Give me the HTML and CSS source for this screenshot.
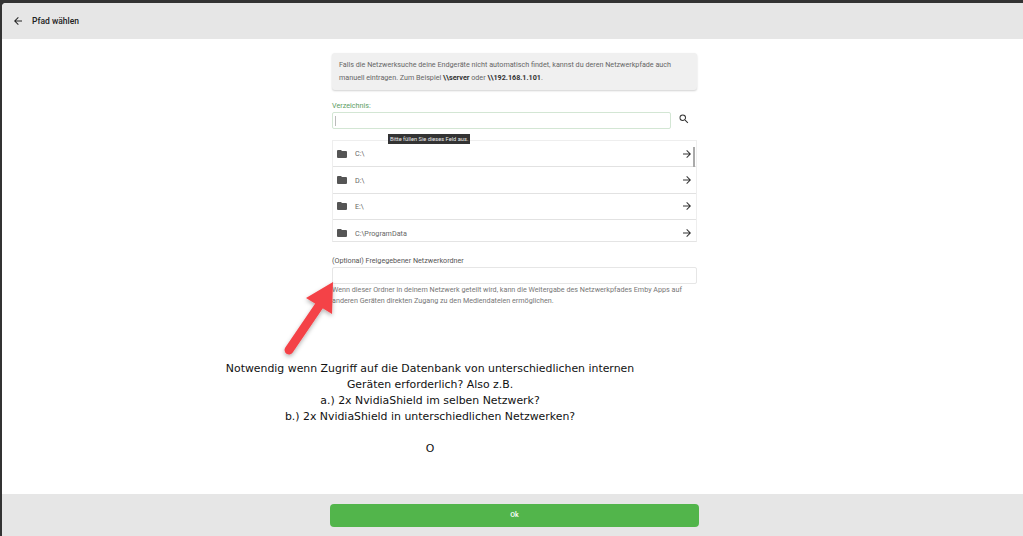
FILE: index.html
```html
<!DOCTYPE html>
<html lang="de">
<head>
  <meta charset="UTF-8" />
  <title>Pfad wählen</title>
  <link rel="stylesheet" href="styles.css">
</head>
<body>
  <div class="dialog">
    <div class="kopf">
      <svg class="zurueck" viewBox="0 0 24 24"><path d="M20 11H7.800l5.600-5.600L12 4l-8 8 8 8 1.400-1.400L7.800 13H20z"/></svg>
      <h1>Pfad wählen</h1>
    </div>

    <div class="inhalt">
      <div class="formular">
        <div class="hinweis">
          Falls die Netzwerksuche deine Endgeräte nicht automatisch findet, kannst du deren Netzwerkpfade auch<br>
          manuell eintragen. Zum Beispiel <b>\\server</b> oder <b>\\192.168.1.101</b>.
        </div>

        <label class="feld-label">Verzeichnis:</label>
        <div class="suche">
          <div class="eingabe aktiv"><span class="cursor"></span></div>
          <svg class="lupe" viewBox="0 0 24 24"><path d="M15.500 14h-.79l-.28-.27A6.471 6.471 0 0 0 16 9.500 6.500 6.500 0 1 0 9.500 16c1.610 0 3.090-.59 4.230-1.570l.27.28v.79l5 4.990L20.490 19l-4.990-5zm-6 0C7.010 14 5 11.990 5 9.500S7.010 5 9.500 5 14 7.010 14 9.500 11.990 14 9.500 14z"/></svg>
          <span class="tooltip">Bitte füllen Sie dieses Feld aus.</span>
        </div>

        <div class="liste">
          <div class="zeile">
            <svg class="ordner" viewBox="0 0 24 24"><path d="M10 4H4a2 2 0 0 0-2 2v12a2 2 0 0 0 2 2h16a2 2 0 0 0 2-2V8a2 2 0 0 0-2-2h-8z"/></svg>
            <span class="pfad">C:\</span>
            <svg class="pfeil" viewBox="0 0 24 24"><path d="M12 4l-1.400 1.400L16.200 11H4v2h12.200l-5.600 5.600L12 20l8-8z"/></svg>
          </div>
          <div class="zeile">
            <svg class="ordner" viewBox="0 0 24 24"><path d="M10 4H4a2 2 0 0 0-2 2v12a2 2 0 0 0 2 2h16a2 2 0 0 0 2-2V8a2 2 0 0 0-2-2h-8z"/></svg>
            <span class="pfad">D:\</span>
            <svg class="pfeil" viewBox="0 0 24 24"><path d="M12 4l-1.400 1.400L16.200 11H4v2h12.200l-5.600 5.600L12 20l8-8z"/></svg>
          </div>
          <div class="zeile">
            <svg class="ordner" viewBox="0 0 24 24"><path d="M10 4H4a2 2 0 0 0-2 2v12a2 2 0 0 0 2 2h16a2 2 0 0 0 2-2V8a2 2 0 0 0-2-2h-8z"/></svg>
            <span class="pfad">E:\</span>
            <svg class="pfeil" viewBox="0 0 24 24"><path d="M12 4l-1.400 1.400L16.200 11H4v2h12.200l-5.600 5.600L12 20l8-8z"/></svg>
          </div>
          <div class="zeile letzte">
            <svg class="ordner" viewBox="0 0 24 24"><path d="M10 4H4a2 2 0 0 0-2 2v12a2 2 0 0 0 2 2h16a2 2 0 0 0 2-2V8a2 2 0 0 0-2-2h-8z"/></svg>
            <span class="pfad">C:\ProgramData</span>
            <svg class="pfeil" viewBox="0 0 24 24"><path d="M12 4l-1.400 1.400L16.200 11H4v2h12.200l-5.600 5.600L12 20l8-8z"/></svg>
          </div>
          <div class="scrollbar"></div>
        </div>

        <label class="feld-label netz">(Optional) Freigegebener Netzwerkordner</label>
        <div class="eingabe"></div>
        <p class="beschreibung">Wenn dieser Ordner in deinem Netzwerk geteilt wird, kann die Weitergabe des Netzwerkpfades Emby Apps auf anderen Geräten direkten Zugang zu den Mediendateien ermöglichen.</p>
      </div>

      <div class="notiz">
        Notwendig wenn Zugriff auf die Datenbank von unterschiedlichen internen<br>
        Geräten erforderlich? Also z.B.<br>
        a.) 2x NvidiaShield im selben Netzwerk?<br>
        b.) 2x NvidiaShield in unterschiedlichen Netzwerken?<br>
        <br>
        O
      </div>
    </div>

    <div class="fuss">
      <button class="ok">Ok</button>
    </div>
  </div>

  <!-- roter Pfeil aus dem Screenshot -->
  <svg class="rot-pfeil" viewBox="0 0 70 85">
    <defs>
      <filter id="schatten" x="-30%" y="-30%" width="160%" height="160%">
        <feDropShadow dx="0" dy="2" stdDeviation="2" flood-color="#000" flood-opacity="0.3"/>
      </filter>
    </defs>
    <g filter="url(#schatten)">
      <path d="M55 6L28 22L54 38Z" fill="#f44347"/>
      <path d="M43 27L11 74" stroke="#f44347" stroke-width="9" stroke-linecap="round" fill="none"/>
    </g>
  </svg>
</body>
</html>
```

FILE: styles.css
```css
html, body {
  height: 100%;
}
body {
  margin: 0;
  font-family: Roboto, "Liberation Sans", sans-serif;
  background-color: #333;
  padding: 3px 0 0 2px;
  box-sizing: border-box;
  overflow: hidden;
}
.dialog {
  height: 100%;
  display: flex;
  flex-direction: column;
  background-color: #fff;
  border-top-left-radius: 4px;
}
.kopf {
  height: 36px;
  flex-shrink: 0;
  display: flex;
  align-items: center;
  padding-left: 10px;
  background-color: #e6e6e6;
  border-top-left-radius: 4px;
}
.zurueck {
  width: 12px;
  height: 12px;
  fill: #222;
}
.kopf h1 {
  margin: 0 0 0 8px;
  font-size: 8.500px;
  font-weight: 500;
  color: #222;
}
.inhalt {
  flex: 1;
  display: flex;
  flex-direction: column;
  align-items: flex-start;
}
.formular {
  width: 365px;
  margin: 14px 0 0 330px;
}
.hinweis {
  height: 37px;
  box-sizing: border-box;
  padding: 6px 7px;
  background-color: #f0f0f0;
  border-radius: 3px;
  box-shadow: 0 1px 2px rgba(0, 0, 0, 0.18);
  font-size: 7.200px;
  line-height: 12.500px;
  color: #666;
  white-space: nowrap;
}
.hinweis b {
  color: #333;
}
.feld-label {
  display: block;
  margin: 11px 0 2px;
  font-size: 7.200px;
  line-height: 9px;
  color: #5c9c5f;
}
.suche {
  position: relative;
  display: flex;
  align-items: center;
}
.eingabe {
  height: 17px;
  box-sizing: border-box;
  border: 1px solid #e6e6e6;
  border-radius: 2px;
  background-color: #fff;
}
.eingabe.aktiv {
  width: 339px;
  flex-shrink: 0;
  display: flex;
  align-items: center;
  padding-left: 2px;
  border-color: #d3e6d4;
}
.cursor {
  width: 1px;
  height: 10px;
  background-color: #bbb;
}
.lupe {
  width: 12px;
  height: 12px;
  margin: -3px 0 0 7px;
  fill: #333;
}
.tooltip {
  position: absolute;
  z-index: 1;
  left: 56px;
  top: 22px;
  padding: 1px 2px;
  background-color: #333;
  color: #eee;
  font-size: 5.700px;
  line-height: 8px;
  white-space: nowrap;
}
.liste {
  position: relative;
  margin-top: 11px;
  height: 100px;
  overflow: hidden;
  border: 1px solid #eee;
  border-bottom-color: #e4e4e4;
}
.zeile {
  height: 26.400px;
  box-sizing: border-box;
  display: flex;
  align-items: center;
  padding: 0 2px 0 3px;
  border-bottom: 1px solid #e2e2e2;
}
.zeile.letzte {
  border-bottom: none;
}
.ordner {
  width: 12px;
  height: 12px;
  fill: #555;
}
.pfad {
  margin-left: 7px;
  flex: 1;
  font-size: 7.200px;
  color: #666;
}
.pfeil {
  width: 12px;
  height: 12px;
  margin-right: 1px;
  fill: #333;
}
.scrollbar {
  position: absolute;
  right: 1px;
  top: 6px;
  width: 2px;
  height: 20px;
  background-color: #aaa;
}
.feld-label.netz {
  margin: 14px 0 2px;
  color: #555;
}
.beschreibung {
  margin: 1px 0 0;
  font-size: 7.200px;
  line-height: 10.500px;
  color: #777;
}
.notiz {
  width: 520px;
  margin: 55px 0 0 168px;
  text-align: center;
  font-family: "DejaVu Sans", sans-serif;
  font-size: 10.900px;
  line-height: 16px;
  color: #111;
}
.fuss {
  height: 42px;
  flex-shrink: 0;
  box-sizing: border-box;
  display: flex;
  justify-content: center;
  align-items: center;
  padding-left: 4px;
  background-color: #e6e6e6;
}
.ok {
  width: 369px;
  height: 23px;
  border: none;
  border-radius: 4px;
  background-color: #52b54b;
  color: #fff;
  font-family: Roboto, "Liberation Sans", sans-serif;
  font-size: 7px;
  font-weight: 500;
}
.rot-pfeil {
  position: absolute;
  left: 278px;
  top: 276px;
  width: 70px;
  height: 85px;
}
```
